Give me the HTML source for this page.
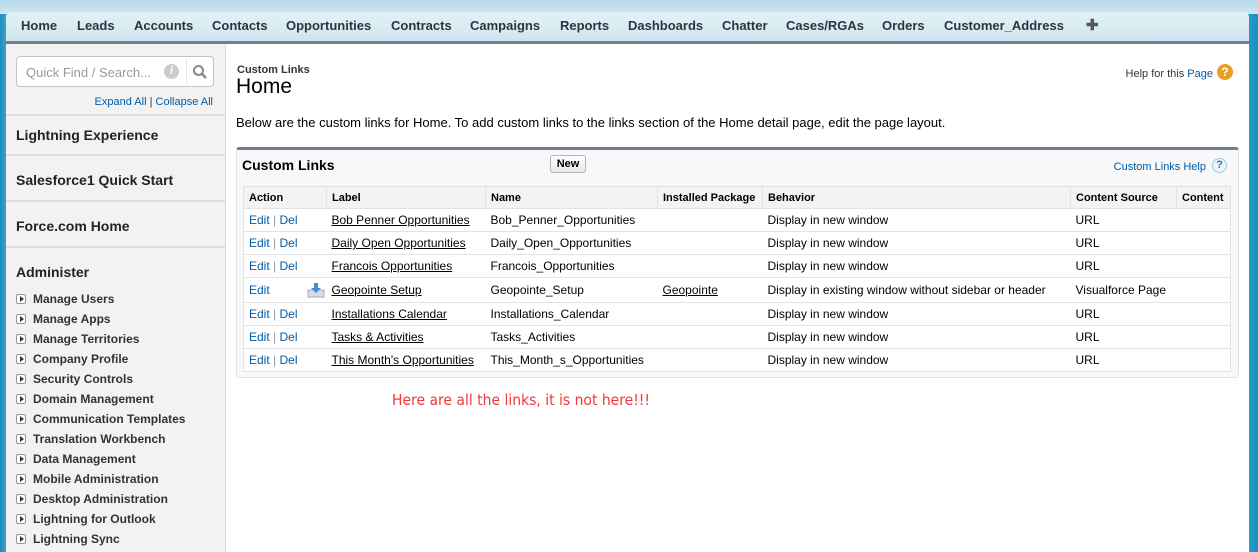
<!DOCTYPE html>
<html><head><meta charset="utf-8"><style>
*{margin:0;padding:0;box-sizing:border-box}
body{width:1258px;height:552px;overflow:hidden;font-family:"Liberation Sans",Arial,sans-serif;background:linear-gradient(90deg,#1b8fbf 0,#3aa3cc 6px,#6cb9d6 30px,#9fd0e2 50%,#6cb9d6 97%,#1590bf 100%);position:relative}
.topbg{position:absolute;left:0;top:0;width:1258px;height:14px;background:linear-gradient(180deg,#b7dbe8,#cfe6ef)}
.nav{position:absolute;left:6px;top:12px;width:1243px;background:linear-gradient(180deg,#e3f1f7,#cfe6ef);border-radius:5px 5px 0 0;border-bottom:3px solid #747b92;height:32px}
.nav span{position:absolute;top:6px;font-size:13px;font-weight:bold;color:#2d3440}
.side{position:absolute;left:6px;top:44px;width:220px;height:508px;background:#f2f2f2;border-right:1px solid #ddd}
.main{position:absolute;left:226px;top:44px;width:1023px;height:508px;background:#fff}
.abs{position:absolute}
.qf{left:10px;top:12px;width:198px;height:31px;border:1px solid #c4c4c4;border-radius:4px;background:#fff}
.sec{position:absolute;left:0;width:219px;border-top:2px solid #ddd;font-size:14px;font-weight:bold;color:#222;padding-left:10px}
.it{position:absolute;left:10px;font-size:12px;font-weight:bold;color:#333}
.it i{display:inline-block;width:10px;height:10px;border:1px solid #999;border-radius:2px;background:#fff;vertical-align:-1px;margin-right:7px;position:relative}
.it i:after{content:"";position:absolute;left:3px;top:1px;border-left:4px solid #333;border-top:3px solid transparent;border-bottom:3px solid transparent}
a{color:#015ba7;text-decoration:none}
.box{left:10px;top:103px;width:1003px;height:231px;border:1px solid #e0e3e5;border-top:3px solid #747b92;border-radius:3px;background:#f8f8f8}
table{position:absolute;left:6px;top:36px;border-collapse:collapse;background:#fff;font-size:12px;color:#000;border:1px solid #e0e3e5}
td,th{border-bottom:1px solid #e3e3e3;padding:0 5px;height:23px;text-align:left;white-space:nowrap}
th{background:#f2f3f3;font-size:11px;font-weight:bold;border:1px solid #e0e3e5;height:22px}
u{color:#000}
.ed{color:#015ba7}
</style></head><body>
<div class="topbg"></div>
<div class="nav">
<span style="left:15px">Home</span><span style="left:71px">Leads</span><span style="left:128px">Accounts</span><span style="left:206px">Contacts</span><span style="left:280px">Opportunities</span><span style="left:385px">Contracts</span><span style="left:464px">Campaigns</span><span style="left:554px">Reports</span><span style="left:622px">Dashboards</span><span style="left:716px">Chatter</span><span style="left:780px">Cases/RGAs</span><span style="left:876px">Orders</span><span style="left:938px">Customer_Address</span><span style="left:1080px;font-size:15px;top:4px;color:#555">✚</span>
</div>
<div class="side">
<div class="abs qf"><span class="abs" style="left:9px;top:8px;font-size:13px;color:#999">Quick Find / Search...</span><span class="abs" style="left:147px;top:7px;width:15px;height:15px;border-radius:50%;background:#ccc;color:#fff;font-size:11px;font-weight:bold;font-style:italic;text-align:center;line-height:15px">i</span><span class="abs" style="left:169px;top:2px;height:25px;border-left:1px dotted #ccc"></span>
<svg class="abs" style="left:175px;top:7px" width="16" height="16" viewBox="0 0 16 16"><circle cx="6.5" cy="6.5" r="4.5" fill="none" stroke="#888" stroke-width="2"/><path d="M10 10l4 4" stroke="#888" stroke-width="2.5"/></svg></div>
<div class="abs" style="right:12px;top:52px;font-size:11px;color:#333"><a>Expand All</a> | <a>Collapse All</a></div>
<div class="sec" style="top:70px;height:46px;padding-top:11px">Lightning Experience</div>
<div class="sec" style="top:110px;height:46px;padding-top:16px">Salesforce1 Quick Start</div>
<div class="sec" style="top:156px;height:46px;padding-top:16px">Force.com Home</div>
<div class="sec" style="top:202px;height:300px;padding-top:16px">Administer</div>
<div class="it" style="top:248px"><i></i>Manage Users</div>
<div class="it" style="top:268px"><i></i>Manage Apps</div>
<div class="it" style="top:288px"><i></i>Manage Territories</div>
<div class="it" style="top:308px"><i></i>Company Profile</div>
<div class="it" style="top:328px"><i></i>Security Controls</div>
<div class="it" style="top:348px"><i></i>Domain Management</div>
<div class="it" style="top:368px"><i></i>Communication Templates</div>
<div class="it" style="top:388px"><i></i>Translation Workbench</div>
<div class="it" style="top:408px"><i></i>Data Management</div>
<div class="it" style="top:428px"><i></i>Mobile Administration</div>
<div class="it" style="top:448px"><i></i>Desktop Administration</div>
<div class="it" style="top:468px"><i></i>Lightning for Outlook</div>
<div class="it" style="top:488px"><i></i>Lightning Sync</div>
</div>
<div class="main">
<div class="abs" style="left:11px;top:20px;font-size:11px;font-weight:bold;color:#333">Custom Links</div>
<div class="abs" style="left:10px;top:31px;font-size:21px;color:#000">Home</div>
<div class="abs" style="right:36px;top:24px;font-size:11px;color:#333">Help for this <a>Page</a></div>
<div class="abs" style="right:16px;top:20px;width:16px;height:16px;border-radius:50%;background:#e8a020;color:#fff;font-size:12px;font-weight:bold;text-align:center;line-height:16px">?</div>
<div class="abs" style="left:10px;top:71px;font-size:13px;color:#000">Below are the custom links for Home. To add custom links to the links section of the Home detail page, edit the page layout.</div>
<div class="abs box">
<div class="abs" style="left:5px;top:7px;font-size:14px;font-weight:bold;color:#000">Custom Links</div>
<div class="abs" style="left:313px;top:5px;width:36px;height:18px;border:1px solid #b5b5b5;border-radius:3px;background:linear-gradient(#fff,#e8e8e8);font-size:11px;font-weight:bold;text-align:center;line-height:16px">New</div>
<div class="abs" style="right:32px;top:11px;font-size:11px;color:#015ba7">Custom Links Help</div>
<div class="abs" style="right:11px;top:8px;width:15px;height:15px;border-radius:50%;border:1px solid #9cc;background:#eef6fa;color:#2a7ab0;font-size:11px;font-weight:bold;text-align:center;line-height:13px">?</div>
<table>
<tr><th style="width:83px">Action</th><th style="width:159px">Label</th><th style="width:172px">Name</th><th style="width:105px">Installed Package</th><th style="width:308px">Behavior</th><th style="width:106px">Content Source</th><th style="width:54px">Content</th></tr>
<tr><td class="ed">Edit <span style="color:#999">|</span> Del</td><td><u>Bob Penner Opportunities</u></td><td>Bob_Penner_Opportunities</td><td></td><td>Display in new window</td><td>URL</td><td></td></tr>
<tr><td class="ed">Edit <span style="color:#999">|</span> Del</td><td><u>Daily Open Opportunities</u></td><td>Daily_Open_Opportunities</td><td></td><td>Display in new window</td><td>URL</td><td></td></tr>
<tr><td class="ed">Edit <span style="color:#999">|</span> Del</td><td><u>Francois Opportunities</u></td><td>Francois_Opportunities</td><td></td><td>Display in new window</td><td>URL</td><td></td></tr>
<tr style="height:25px"><td class="ed" style="position:relative">Edit<svg style="position:absolute;left:63px;top:4px" width="18" height="16" viewBox="0 0 18 16"><rect x="1" y="8" width="16" height="7" fill="#d8dde2" stroke="#aab"/><path d="M7 1h4v5h3l-5 5-5-5h3z" fill="#3a8fd8"/></svg></td><td><u>Geopointe Setup</u></td><td>Geopointe_Setup</td><td><u>Geopointe</u></td><td>Display in existing window without sidebar or header</td><td>Visualforce Page</td><td></td></tr>
<tr><td class="ed">Edit <span style="color:#999">|</span> Del</td><td><u>Installations Calendar</u></td><td>Installations_Calendar</td><td></td><td>Display in new window</td><td>URL</td><td></td></tr>
<tr><td class="ed">Edit <span style="color:#999">|</span> Del</td><td><u>Tasks &amp; Activities</u></td><td>Tasks_Activities</td><td></td><td>Display in new window</td><td>URL</td><td></td></tr>
<tr><td class="ed">Edit <span style="color:#999">|</span> Del</td><td><u>This Month's Opportunities</u></td><td>This_Month_s_Opportunities</td><td></td><td>Display in new window</td><td>URL</td><td></td></tr>
</table>
</div>
<div class="abs" style="left:166px;top:347px;font-size:15.5px;color:#f2383c;font-family:'DejaVu Sans Condensed','Liberation Sans',sans-serif">Here are all the links, it is not here!!!</div>
</div>
</body></html>
